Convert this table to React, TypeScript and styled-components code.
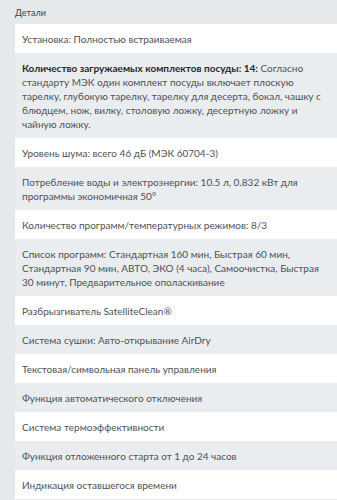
import styled, { createGlobalStyle } from "styled-components";

const GlobalStyle = createGlobalStyle`
    html, body {
        margin: 0;
        padding: 0;
        background: #e5e9ec;
        overflow: hidden;
    }
`;

type Spec = { title?: string; text: string };

const specs: Spec[] = [
    { text: "Установка: Полностью встраиваемая" },
    {
        title: "Количество загружаемых комплектов посуды: 14:",
        text: " Согласно стандарту МЭК один комплект посуды включает плоскую тарелку, глубокую тарелку, тарелку для десерта, бокал, чашку с блюдцем, нож, вилку, столовую ложку, десертную ложку и чайную ложку.",
    },
    { text: "Уровень шума: всего 46 дБ (МЭК 60704-3)" },
    { text: "Потребление воды и электроэнергии: 10.5 л, 0.832 кВт для программы экономичная 50°" },
    { text: "Количество программ/температурных режимов: 8/3" },
    {
        text: "Список программ: Стандартная 160 мин, Быстрая 60 мин, Стандартная 90 мин, АВТО, ЭКО (4 часа), Самоочистка, Быстрая 30\u00a0минут, Предварительное ополаскивание",
    },
    { text: "Разбрызгиватель SatelliteClean®" },
    { text: "Система сушки: Авто-открывание AirDry" },
    { text: "Текстовая/символьная панель управления" },
    { text: "Функция автоматического отключения" },
    { text: "Система термоэффективности" },
    { text: "Функция отложенного старта от 1 до 24 часов" },
    { text: "Индикация оставшегося времени" },
];

const App = () => {
    return (
        <>
            <GlobalStyle />
            <Details>
                <Heading>Детали</Heading>
                <List>
                    {specs.map((s, i) => (
                        <Row key={i} $odd={i % 2 === 1}>
                            {s.title && <b>{s.title}</b>}
                            {s.text}
                        </Row>
                    ))}
                </List>
            </Details>
        </>
    );
};

const Details = styled.section`
    padding: 6px 0 0 15px;
    width: 322px;
    font-family: Lato, "Noto Sans", sans-serif;
`;

const Heading = styled.div`
    font-size: 9px;
    line-height: 12px;
    color: #3f4448;
    padding-top: 1px;
    height: 17px;
`;

const List = styled.ul`
    list-style: none;
    margin: 0;
    padding: 0;
`;

const Row = styled.li<{ $odd: boolean }>`
    padding: 7.5px 4px 7.5px 7px;
    font-size: 10px;
    line-height: 14px;
    color: #4d5256;
    background: ${(p) => (p.$odd ? "#e9edf0" : "#ffffff")};

    b {
        font-weight: 700;
        color: #25292c;
    }
`;

export default App;
